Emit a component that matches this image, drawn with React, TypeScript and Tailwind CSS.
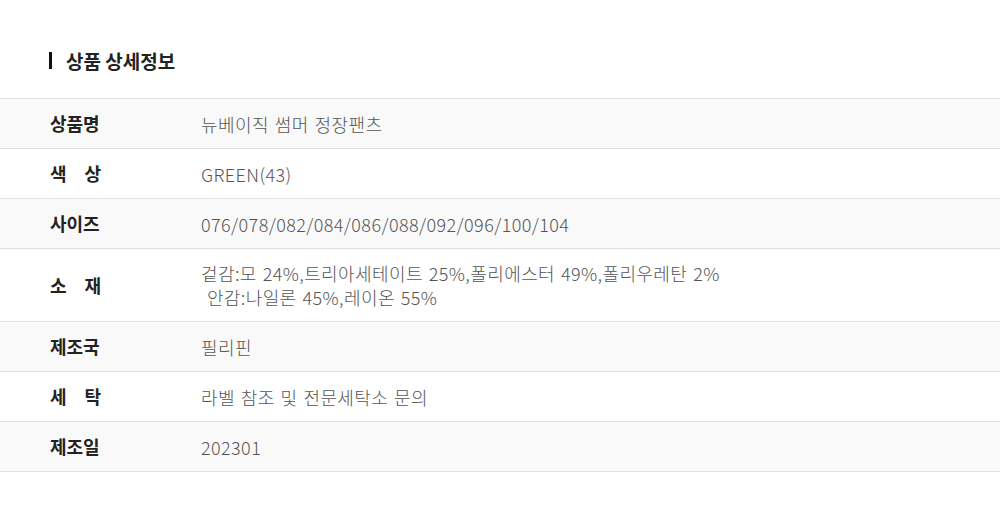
import React from "react";

type Row = { label: string[]; value: string[] };

const rows: Row[] = [
  { label: ["상품명"], value: ["뉴베이직 썸머 정장팬츠"] },
  { label: ["색", "상"], value: ["GREEN(43)"] },
  { label: ["사이즈"], value: ["076/078/082/084/086/088/092/096/100/104"] },
  {
    label: ["소", "재"],
    value: [
      "겉감:모 24%,트리아세테이트 25%,폴리에스터 49%,폴리우레탄 2%",
      "\u00a0안감:나일론 45%,레이온 55%",
    ],
  },
  { label: ["제조국"], value: ["필리핀"] },
  { label: ["세", "탁"], value: ["라벨 참조 및 전문세탁소 문의"] },
  { label: ["제조일"], value: ["202301"] },
];

export default function App() {
  return (
    <div
      className="w-[1000px] h-[521px] bg-white"
      style={{ fontFamily: '"Noto Sans CJK KR", "Noto Sans", sans-serif' }}
    >
      {/* Section title */}
      <div className="pt-[50px] pl-[49px] h-[98px]">
        <div className="flex items-center gap-[14px] h-[20px]">
          <span className="w-[3px] h-[17px] bg-[#111]" />
          <h2 className="text-[19px] font-bold text-[#222] leading-none">
            상품 상세정보
          </h2>
        </div>
      </div>

      {/* Spec table */}
      <div className="border-t border-[#e1e1e1]">
        {rows.map((row, i) => (
          <div
            key={i}
            className={`flex items-center border-b border-[#e1e1e1] ${
              row.value.length > 1 ? "min-h-[73px]" : "h-[50px]"
            } ${i % 2 === 0 ? "bg-[#f9f9f9]" : "bg-white"}`}
          >
            <div className="w-[201px] pl-[50px] shrink-0">
              {row.label.length > 1 ? (
                <div className="w-[51px] flex justify-between text-[18px] font-bold text-[#222]">
                  {row.label.map((c) => (
                    <span key={c}>{c}</span>
                  ))}
                </div>
              ) : (
                <span className="text-[18px] font-bold text-[#222]">
                  {row.label[0]}
                </span>
              )}
            </div>
            <div className="text-[18px] font-light text-[#555] leading-[24px] tracking-[0.4px] [word-spacing:1.5px]">
              {row.value.map((v, j) => (
                <div key={j} className="whitespace-pre">
                  {v}
                </div>
              ))}
            </div>
          </div>
        ))}
      </div>
    </div>
  );
}
